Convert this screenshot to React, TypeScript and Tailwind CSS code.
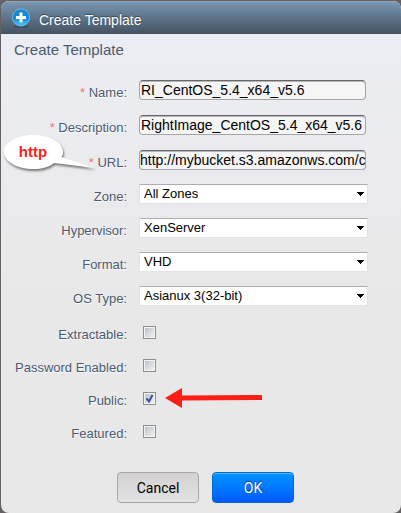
import type { ReactNode } from 'react';

const labelClass =
  'w-[126px] shrink-0 text-right text-[13px] leading-4 whitespace-nowrap text-[#4a5a70] [text-shadow:0_1px_1px_#ffffff]';

function TextRow({ id, label, value, clipped = false, children }: { id: string; label: string; value: string; clipped?: boolean; children?: ReactNode }) {
  return (
    <div className="relative flex h-5 gap-3">
      {children}
      <label htmlFor={id} className={`${labelClass} pt-[5px]`}>
        <span className="text-[#e87070]">* </span>
        {label}
      </label>
      <input
        id={id}
        type="text"
        defaultValue={value}
        className={`h-5 min-w-0 flex-1 rounded border border-[#a5a5a5] border-t-[#686868] bg-[#f5f5f5] text-sm leading-4 text-black shadow-[inset_0_1px_0_#b5b5b5] outline-none ${clipped ? 'px-0' : 'px-px'}`}
      />
    </div>
  );
}

function SelectRow({ id, label, value }: { id: string; label: string; value: string }) {
  return (
    <div className="flex h-5 gap-3">
      <label htmlFor={id} className={`${labelClass} pt-[5px]`}>{label}</label>
      <div className="relative min-w-0 flex-1">
        <select
          id={id}
          className="block h-5 w-full appearance-none border border-[#e2e3ea] border-t-[#abadb3] bg-white pl-1 text-[13px] leading-4 text-black outline-none"
        >
          <option>{value}</option>
        </select>
        <svg className="pointer-events-none absolute top-2 right-1 h-1 w-[7px]" viewBox="0 0 7 4" shapeRendering="crispEdges" aria-hidden="true">
          <path d="M0 0h7v1H6v1H5v1H4v1H3V3H2V2H1V1H0z" fill="#000" />
        </svg>
      </div>
    </div>
  );
}

function CheckRow({ id, label, checked = false, children }: { id: string; label: string; checked?: boolean; children?: ReactNode }) {
  return (
    <div className="relative flex h-[13px] gap-4">
      <label htmlFor={id} className={`${labelClass} pt-px`}>{label}</label>
      <div className="relative size-[13px]">
        <input
          id={id}
          type="checkbox"
          defaultChecked={checked}
          className="peer block size-[13px] appearance-none border border-[#8e8f8f] bg-linear-to-br from-[#b5bbc6] to-[#f7f7f7] shadow-[inset_0_0_0_1px_#f4f4f4]"
        />
        <svg className="pointer-events-none invisible absolute inset-0 size-[13px] peer-checked:visible" viewBox="0 0 13 13" aria-hidden="true">
          <path d="M3.5 6.5 6 9.5 9.5 3" fill="none" stroke="#3c529c" strokeWidth="2" />
        </svg>
      </div>
      {children}
    </div>
  );
}

function AddIcon() {
  return (
    <svg className="size-5" viewBox="0 0 20 20" aria-hidden="true">
      <defs>
        <linearGradient id="orb" x1="0" y1="0" x2="0" y2="1">
          <stop offset="0" stopColor="#1b83cc" />
          <stop offset="0.55" stopColor="#1689d4" />
          <stop offset="1" stopColor="#45cdf8" />
        </linearGradient>
      </defs>
      <ellipse cx="10" cy="18.5" rx="8" ry="1.3" fill="#2e3c48" opacity="0.6" />
      <circle cx="10" cy="9.5" r="8.6" fill="url(#orb)" stroke="#68b6e6" strokeWidth="1" />
      <path d="M10 4.5v10M5 9.5h10" stroke="#fff" strokeWidth="3" />
    </svg>
  );
}

function Callout() {
  return (
    <div className="absolute -top-4 left-[3px] h-10 w-[94px]">
      <svg className="absolute inset-0 h-10 w-[94px] overflow-visible drop-shadow-[1px_2px_1px_#777777]" viewBox="0 0 94 40" aria-hidden="true">
        <path d="M29.5 1C46 1 59 8.500 59 18c0 2-.5 3.500-1.500 5L91 34 50 29c-5 4-12 6-20.500 6C13 35 0 27.500 0 18S13 1 29.500 1z" fill="#fff" />
      </svg>
      <span className="relative block w-[58px] pt-2 text-center text-[15px] leading-5 font-bold text-[#ff1d16]">http</span>
    </div>
  );
}

export default function App() {
  return (
    <div className="bg-[#656163] pt-px pl-px font-['Liberation_Sans',Arial,sans-serif]">
      <main className="overflow-hidden rounded-lg bg-linear-to-b from-[#ecedf2] from-10% to-[#e8e8e8] to-60%">
        <header className="flex h-[33px] items-center gap-2 border-t border-[#91a6b9] bg-linear-to-b from-[#7896b3] to-[#455361] pl-[10px] text-sm text-white">
          <AddIcon />
          <h1 className="pt-1 leading-4 [text-shadow:0_-1px_1px_#35424f]">Create Template</h1>
        </header>
        <form className="pt-2" onSubmit={(e) => e.preventDefault()}>
          <h2 className="pl-[13px] text-[15px] leading-4 text-[#4a5a70]">Create Template</h2>
          <div className="flex flex-col gap-[15px] pt-[22px] pr-[35px]">
            <TextRow id="name" label="Name:" value="RI_CentOS_5.4_x64_v5.6" />
            <TextRow id="description" label="Description:" value="RightImage_CentOS_5.4_x64_v5.6" />
            <TextRow id="url" label="URL:" value="http://mybucket.s3.amazonws.com/centos.vhd" clipped>
              <Callout />
            </TextRow>
          </div>
          <div className="flex flex-col gap-[14px] pt-[14px] pr-[33px]">
            <SelectRow id="zone" label="Zone:" value="All Zones" />
            <SelectRow id="hypervisor" label="Hypervisor:" value="XenServer" />
            <SelectRow id="format" label="Format:" value="VHD" />
            <SelectRow id="os" label="OS Type:" value="Asianux 3(32-bit)" />
          </div>
          <div className="flex flex-col gap-5 pt-5">
            <CheckRow id="extractable" label="Extractable:" />
            <CheckRow id="password" label="Password Enabled:" />
            <CheckRow id="public" label="Public:" checked>
              <svg className="absolute -top-1 left-[163px] h-5 w-[100px]" viewBox="0 0 100 20" aria-hidden="true">
                <path d="M1 10 18 0v7.500L98 7v5l-80 .5V20z" fill="#ff1d16" />
              </svg>
            </CheckRow>
            <CheckRow id="featured" label="Featured:" />
          </div>
          <div className="flex justify-center gap-[13px] pt-[34px] pb-[10px] pl-[9px] font-[Roboto,sans-serif] text-sm">
            <button type="button" className="h-[31px] w-[82px] rounded border border-[#a8a8a8] bg-linear-to-b from-[#d3d0d1] to-[#e3e3e3] text-black">Cancel</button>
            <button type="submit" className="h-[31px] w-[82px] rounded border border-[#0067d8] bg-linear-to-b from-[#0094ff] to-[#0058ff] text-white shadow-[inset_0_1px_0_#5cb8ff] [text-shadow:0_-1px_1px_#002c80]">OK</button>
          </div>
        </form>
      </main>
    </div>
  );
}
